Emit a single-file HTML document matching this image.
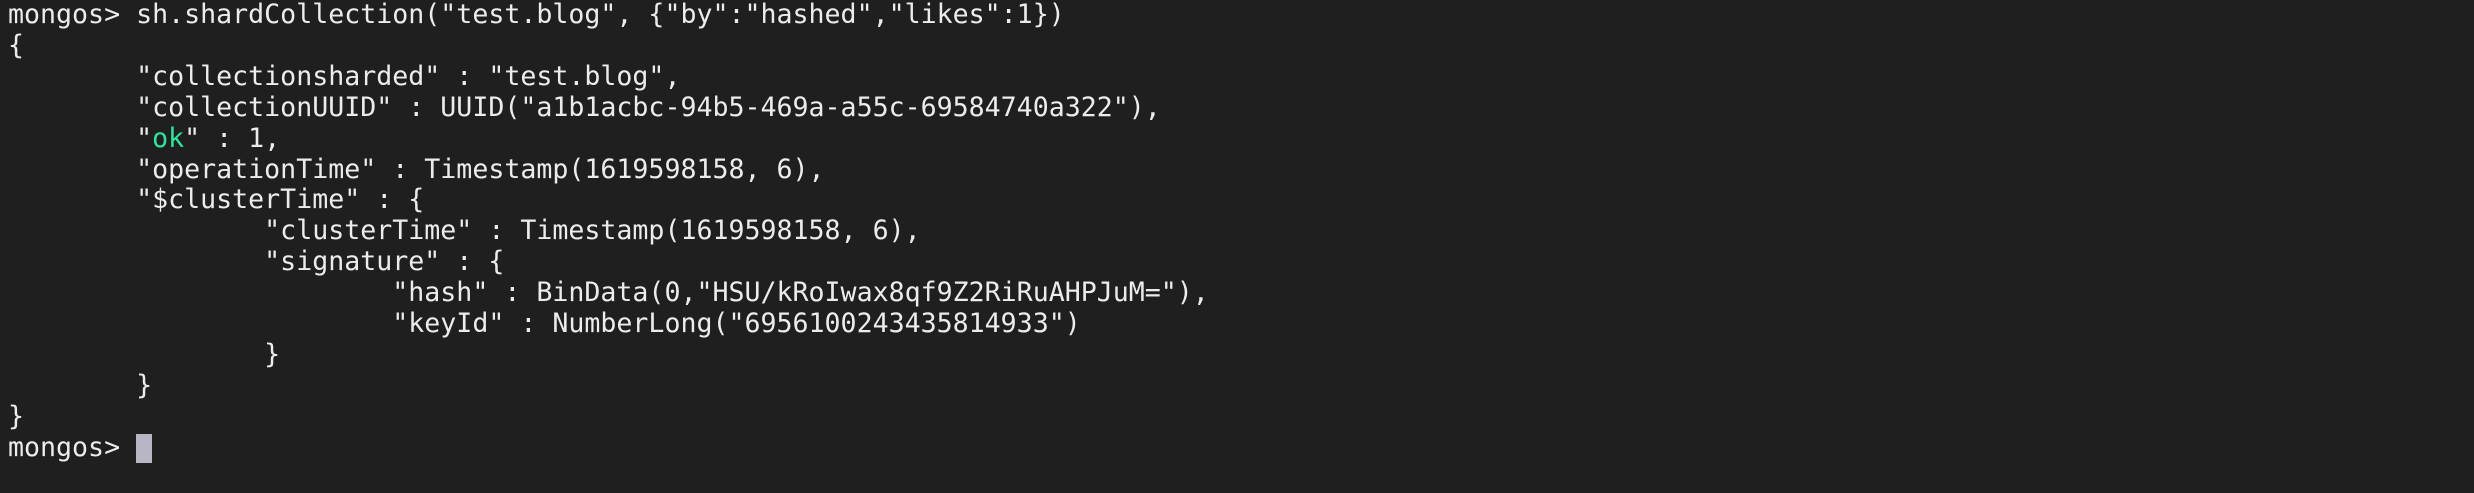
<!DOCTYPE html>
<html><head><meta charset="utf-8"><style>
html,body{margin:0;padding:0;background:#1f1f1f;width:2474px;height:493px;overflow:hidden}
pre{margin:0;position:absolute;left:8px;top:0;font-family:"DejaVu Sans Mono","Liberation Mono",monospace;font-size:26.6px;line-height:30.9px;color:#ececec;white-space:pre}
.g{color:#2fe59c}
.c{display:inline-block;width:16px;height:29px;background:#b8b6c4;vertical-align:top;margin-top:1px}
</style></head><body><pre>mongos&gt; sh.shardCollection("test.blog", {"by":"hashed","likes":1})
{
        "collectionsharded" : "test.blog",
        "collectionUUID" : UUID("a1b1acbc-94b5-469a-a55c-69584740a322"),
        "<span class="g">ok</span>" : 1,
        "operationTime" : Timestamp(1619598158, 6),
        "$clusterTime" : {
                "clusterTime" : Timestamp(1619598158, 6),
                "signature" : {
                        "hash" : BinData(0,"HSU/kRoIwax8qf9Z2RiRuAHPJuM="),
                        "keyId" : NumberLong("6956100243435814933")
                }
        }
}
mongos&gt; <span class="c"></span></pre></body></html>
